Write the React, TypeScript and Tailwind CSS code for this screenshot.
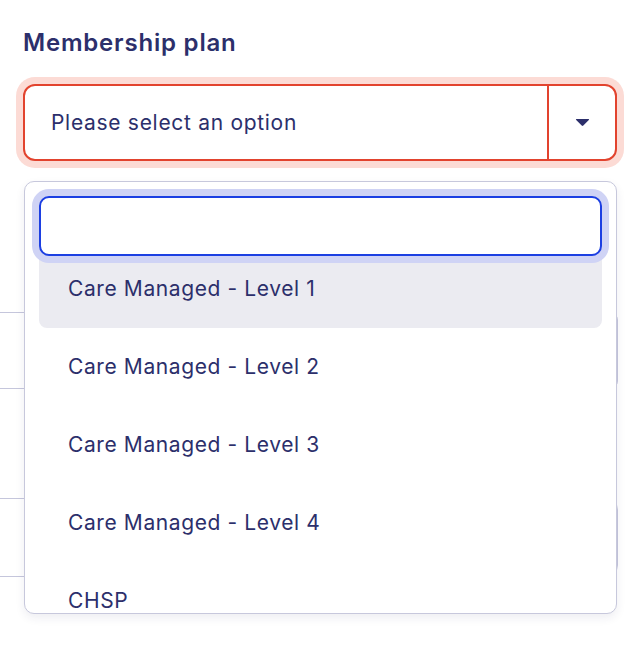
import React from "react";

const options = [
  "Care Managed - Level 1",
  "Care Managed - Level 2",
  "Care Managed - Level 3",
  "Care Managed - Level 4",
  "CHSP",
];

export default function App() {
  return (
    <div className="relative w-[644px] h-[654px] overflow-hidden bg-white font-['Inter',sans-serif] text-[#2c2f6b]">
      <div className="pl-[23px] pr-[27px] pt-[29px]">
        <div className="text-[24px] leading-[28px] font-semibold tracking-[0.8px]">Membership plan</div>
        <div className="mt-[27px] flex h-[77px] rounded-[12px] border-2 border-[#e2432e] bg-white ring-[7px] ring-[#fcdbd5]">
          <div className="flex flex-1 items-center pl-[26px] text-[21px] tracking-[0.7px]">Please select an option</div>
          <div className="flex w-[68px] items-center justify-center border-l-2 border-[#e2432e]">
            <svg width="15" height="9" viewBox="0 0 15 9">
              <path d="M1.5 1 H13.5 Q14.6 1 13.8 1.9 L8.3 7.6 Q7.5 8.4 6.7 7.6 L1.2 1.9 Q0.4 1 1.5 1 Z" fill="#2c2f6b" />
            </svg>
          </div>
        </div>
        <div className="mt-[151px] -ml-[40px] h-[77px] w-[635px] rounded-[8px] border border-[#c5c6dc]" />
        <div className="mt-[109px] -ml-[40px] h-[79px] w-[635px] rounded-[12px] border border-[#c5c6dc]" />
      </div>

      <div className="absolute left-[24px] top-[181px] h-[433px] w-[593px] overflow-hidden rounded-[10px] border border-[#c7c8dc] bg-white px-[14px] pt-[14px] shadow-[0_4px_10px_rgba(40,40,90,0.08)]">
        <div className="relative z-10 h-[60px] rounded-[10px] border-2 border-[#1c3fe2] bg-white ring-[7px] ring-[#cfd3f5]" />
        <div className="-mt-[6px] flex flex-col">
          {options.map((o, i) => (
            <div
              key={o}
              className={`flex h-[78px] shrink-0 items-center rounded-[8px] pl-[29px] text-[21px] tracking-[0.6px] ${i === 0 ? "bg-[#ebebf1]" : ""}`}
            >
              {o}
            </div>
          ))}
        </div>
      </div>
    </div>
  );
}
